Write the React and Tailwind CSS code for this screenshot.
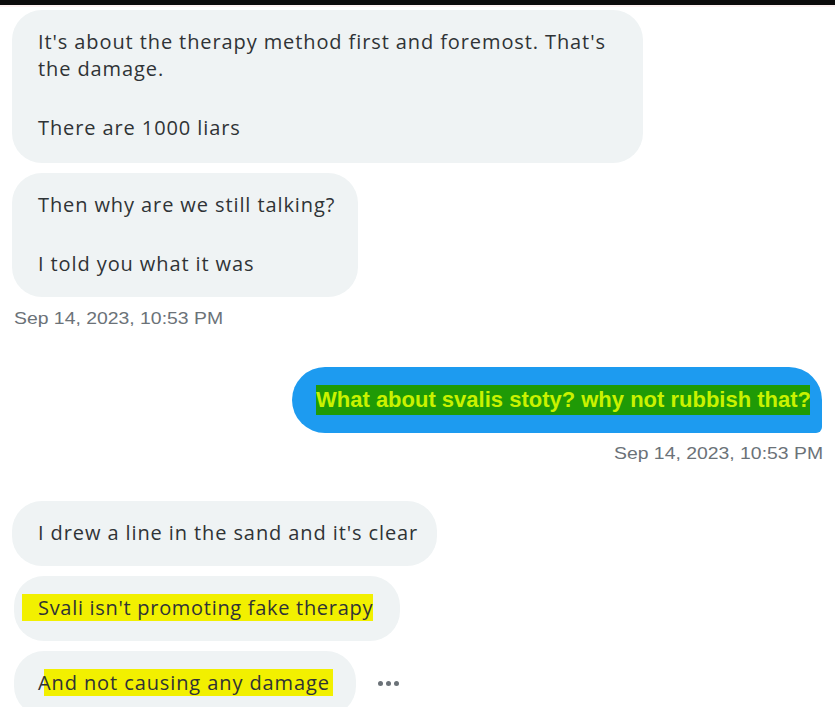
import React from 'react';

const font = { fontFamily: '"Open Sans", "Noto Sans", sans-serif' };
const arial = { fontFamily: '"Liberation Sans", Arial, sans-serif' };

function Bubble({ className = '', pad = 'pl-[26px]', children }) {
    return (
        <div className={`bg-[#eff3f4] text-[#2f3336] text-[20px] leading-[27px] tracking-[0.9px] rounded-[30px] pt-[18px] pb-[20px] whitespace-nowrap ${pad} ${className}`}>
            {children}
        </div>
    );
}

function Stamp({ className = '' }) {
    return (
        <div className={`text-[17px] text-[#6b7278] leading-[22px] ${className}`} style={arial}>
            <span className="inline-block origin-left scale-x-[1.14]">Sep 14, 2023, 10:53 PM</span>
        </div>
    );
}

export default function App() {
    return (
        <div className="w-[835px] h-[707px] overflow-hidden bg-white" style={font}>
            <div className="h-[5px] bg-[#0b0b0b]" />
            <div className="h-[2px] bg-[#fdf2f2]" />

            <div className="flex flex-col items-start px-[12px] pt-[3px]">
                {/* incoming messages */}
                <Bubble className="w-[631px] !pb-[22px]">
                    <p>It's about the therapy method first and foremost. That's<br />the damage.</p>
                    <p className="mt-[32px]">There are 1000 liars</p>
                </Bubble>

                <Bubble className="w-[346px] mt-[10px]">
                    <p>Then why are we still talking?</p>
                    <p className="mt-[32px]">I told you what it was</p>
                </Bubble>

                <Stamp className="mt-[11px] ml-[2px]" />

                {/* outgoing */}
                <div className="self-end mr-[1px] mt-[37px] w-[530px] h-[66px] bg-[#1d9bf0] rounded-[33px] rounded-br-[6px] flex items-center pl-[24px]">
                    <span className="bg-[#1f9a06] text-[#c9f200] text-[22px] font-bold leading-[30px] w-[494px] whitespace-nowrap overflow-hidden" style={arial}>
                        What about svalis stoty? why not rubbish that?
                    </span>
                </div>
                <div className="self-end mr-[1px] mt-[10px] w-[208px]">
                    <Stamp />
                </div>

                <Bubble className="w-[425px] mt-[36px]">
                    I drew a line in the sand and it's clear
                </Bubble>

                <Bubble className="w-[386px] mt-[10px] ml-[2px]" pad="pl-[8px]">
                    <span className="bg-[#f2f000] pl-[16px] inline-block leading-[27px] tracking-[0.7px]">Svali isn't promoting fake therapy</span>
                </Bubble>

                <div className="flex items-center mt-[10px] ml-[2px]">
                    <Bubble className="w-[342px]" pad="pl-[24px]">
                        <span className="relative inline-block">
                            <span className="absolute left-[6px] -right-[3px] top-0 bottom-0 bg-[#f2f000]" />
                            <span className="relative">And not causing any damage</span>
                        </span>
                    </Bubble>
                    <div className="ml-[22px] flex gap-[3px]">
                        <span className="w-[5px] h-[5px] rounded-full bg-[#6b7278]" />
                        <span className="w-[5px] h-[5px] rounded-full bg-[#6b7278]" />
                        <span className="w-[5px] h-[5px] rounded-full bg-[#6b7278]" />
                    </div>
                </div>
            </div>
        </div>
    );
}
